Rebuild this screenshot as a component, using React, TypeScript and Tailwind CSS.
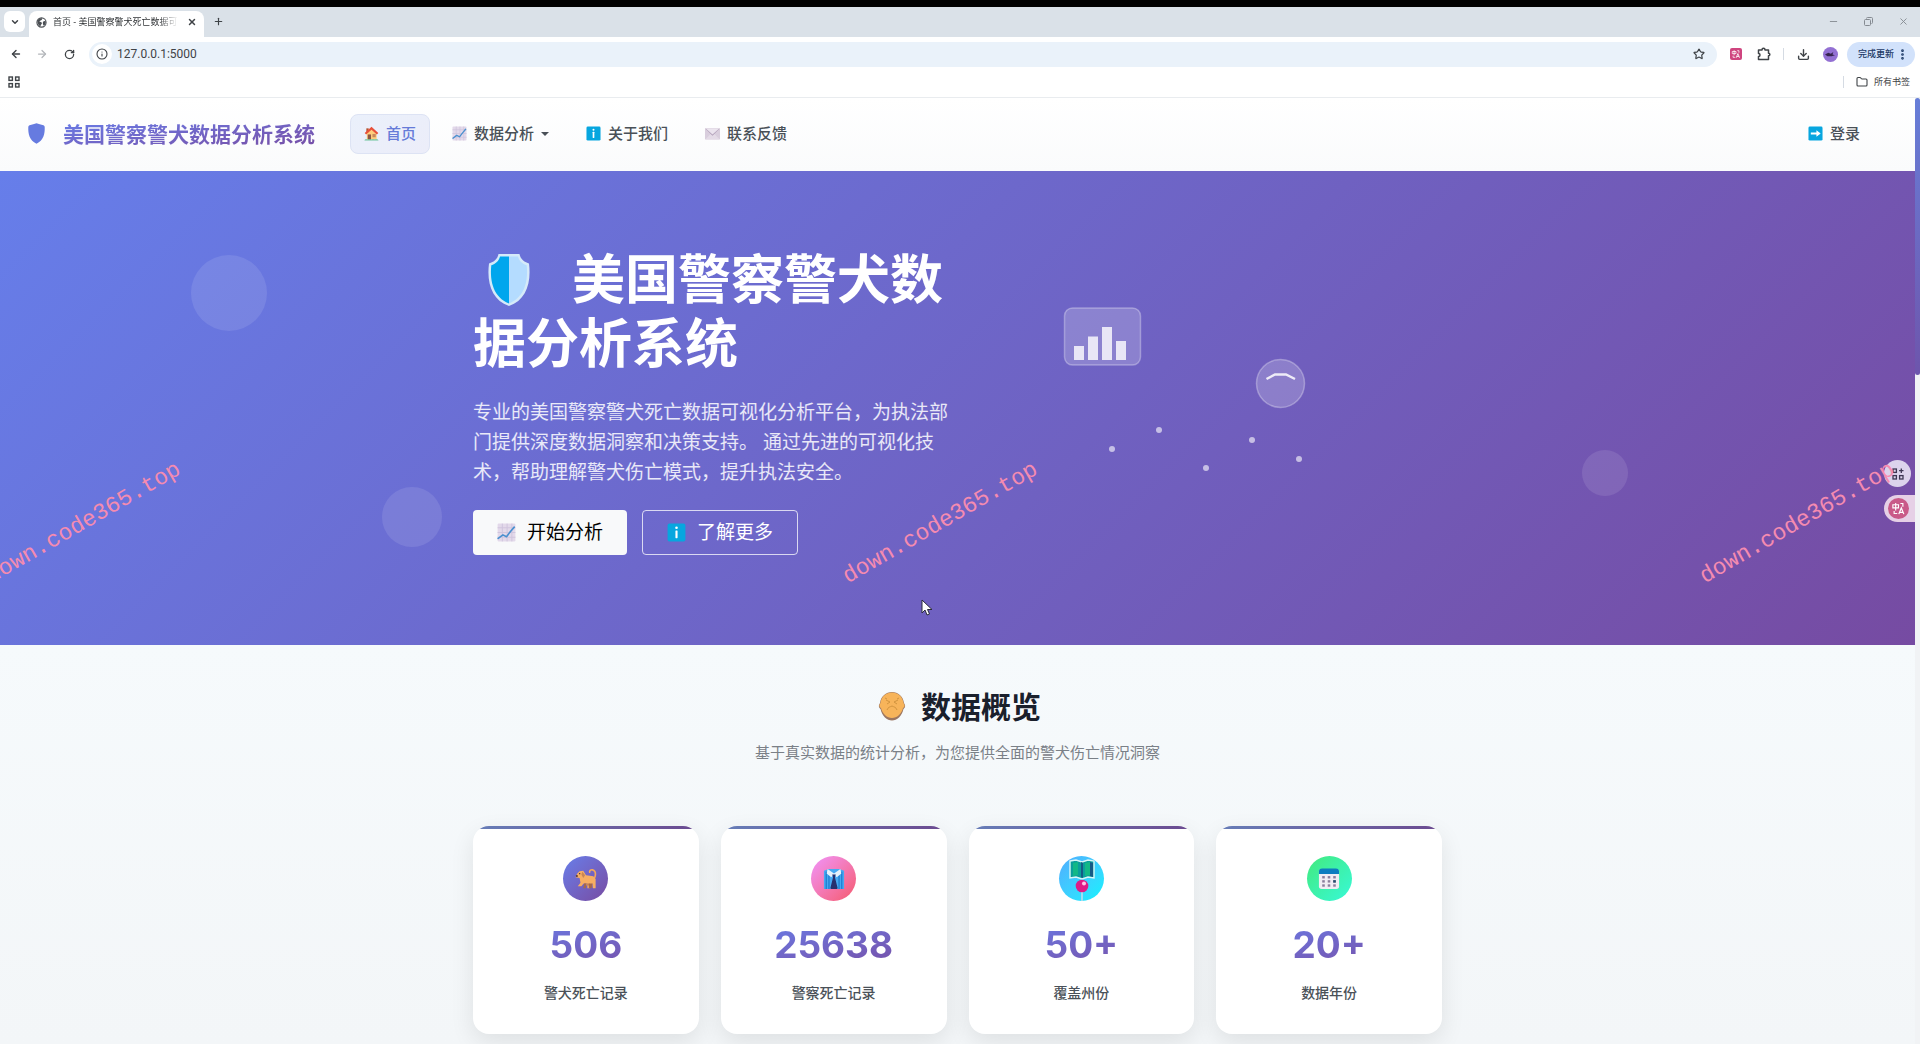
import React from "react";
import {
  ArrowLeft,
  ArrowRight,
  ChevronDown,
  Download,
  Folder,
  Info,
  Minus,
  MoreVertical,
  Plus,
  RotateCw,
  Star,
  X,
} from "lucide-react";

type IconProps = { className?: string };

function GlobeIcon({ className }: IconProps) {
  return (
    <svg viewBox="0 0 24 24" className={className} aria-hidden="true">
      <circle cx="12" cy="12" r="10" fill="#fff" stroke="#4b4f54" strokeWidth="2.4" />
      <path d="M3 9c3-5 7-7 10-6 1 2-1 4-3 4 0 2-2 2-3 3 2 1 6 1 6 4-1 2-3 3-3 6-4-1-7-6-7-11z" fill="#4b4f54" />
      <path d="M16 10c1-1 3-2 5-1 1 4-1 8-4 10-1-2-2-3-2-5 0-2 0-3 1-4z" fill="#4b4f54" />
    </svg>
  );
}

function AppsIcon({ className }: IconProps) {
  return (
    <svg viewBox="0 0 12 12" className={className} fill="none" stroke="#3f4347" strokeWidth="1.4" aria-hidden="true">
      <rect x="1" y="1" width="3.4" height="3.4" />
      <rect x="7.6" y="1" width="3.4" height="3.4" />
      <rect x="1" y="7.6" width="3.4" height="3.4" />
      <rect x="7.6" y="7.6" width="3.4" height="3.4" />
    </svg>
  );
}

function PuzzleIcon({ className }: IconProps) {
  return (
    <svg viewBox="0 0 14 14" className={className} fill="none" stroke="#3f4347" strokeWidth="1.500" strokeLinejoin="round" aria-hidden="true">
      <path d="M1.500 3H5c0-2.200 3-2.200 3 0h3.500v3.200c1.800 0 1.800 2.600 0 2.600v3.700h-10V9.500c2 0 2-3 0-3z" />
    </svg>
  );
}

function TranslateGlyph({ className }: IconProps) {
  return (
    <svg viewBox="0 0 24 24" className={className} fill="none" stroke="#fff" strokeWidth="1.8" aria-hidden="true">
      <path d="M3 6h9v5H3zM7.500 3v12M15 4h4v5M5 16v4h5" />
      <path d="M12.500 21l4-10 4 10M14 18h5" strokeWidth="2" />
    </svg>
  );
}

function BrandShield({ className }: IconProps) {
  return (
    <svg viewBox="0 0 17 21" className={className} aria-hidden="true">
      <path d="M8.500 0.300C10.500 1.200 13 1.500 15.500 2.200Q16.700 2.600 16.700 4C17 11 15.500 17.500 8.500 20.700C1.500 17.500 0 11 0.300 4Q0.300 2.600 1.500 2.200C4 1.500 6.500 1.200 8.500 0.300Z" fill="#667be0" />
    </svg>
  );
}

function HouseIcon({ className }: IconProps) {
  return (
    <svg viewBox="0 0 32 32" className={className} aria-hidden="true">
      <path d="M6 14L17 6l10 9v14H6z" fill="#ffce7c" />
      <path d="M5 5h5v8H5z" fill="#b4532f" />
      <path d="M16 1.500L1.500 15l3 3L16 8l11.500 10 3-3z" fill="#e8503a" />
      <rect x="8" y="18" width="7" height="11" fill="#8c5543" />
      <rect x="18" y="17" width="7" height="7" fill="#c98a5a" />
      <path d="M1 31c0-3 5-3 7-2 3-1 6-1 8 0 3-1 6-1 7 0 3-1 7-1 8 2z" fill="#6cc49a" />
    </svg>
  );
}

function ChartIcon({ className }: IconProps) {
  return (
    <svg viewBox="0 0 32 32" className={className} aria-hidden="true">
      <rect x="1" y="1" width="30" height="30" rx="2" fill="#e3d9ea" />
      <path d="M9 1v30M17 1v30M25 1v30M1 8h30M1 16h30M1 24h30" stroke="#cfc3dc" strokeWidth="1.500" />
      <path d="M2 26l8-6 6 3 7-9 6-7" fill="none" stroke="#4a90cf" strokeWidth="2.800" strokeLinejoin="round" strokeLinecap="round" />
    </svg>
  );
}

function InfoSquare({ className }: IconProps) {
  return (
    <svg viewBox="0 0 32 32" className={className} aria-hidden="true">
      <rect x="1" y="1" width="30" height="30" rx="3" fill="#07a6df" />
      <circle cx="16" cy="8" r="2.200" fill="#fff" />
      <rect x="14.200" y="12.500" width="3.600" height="13" rx="1" fill="#fff" />
    </svg>
  );
}

function MailIcon({ className }: IconProps) {
  return (
    <svg viewBox="0 0 32 32" className={className} aria-hidden="true">
      <rect x="0" y="4" width="32" height="25" rx="2" fill="#d9cedd" />
      <path d="M1 28l11-11h8l11 11z" fill="#e4dbe7" />
      <path d="M1 6h30L16 21z" fill="#b09fb8" />
      <path d="M1 5h30L16 18z" fill="#ebe4ee" />
    </svg>
  );
}

function LoginSquare({ className }: IconProps) {
  return (
    <svg viewBox="0 0 32 32" className={className} aria-hidden="true">
      <rect x="1" y="1" width="30" height="30" rx="3" fill="#07a6df" />
      <path d="M6 14h12V9l9 7-9 7v-5H6z" fill="#fff" />
    </svg>
  );
}

function HeroShield({ className }: IconProps) {
  return (
    <svg viewBox="0 0 44 54" className={className} aria-hidden="true">
      <path
        d="M11.500 1h21c1 5 4.500 8 9.500 9.500C44.500 30 39 47 22 53 5 47-.5 30 2 10.500 7 9 10.500 6 11.500 1z"
        fill="#d5eaf9"
      />
      <path d="M22 3.500H13C12 8 8.500 11 4.300 12.200 2.500 29 7 44.500 22 50.400z" fill="#00a6ed" />
      <path d="M22 3.500h9c1 4.500 4.500 7.500 8.700 8.700C41.500 29 37 44.500 22 50.400z" fill="#b4dcff" />
    </svg>
  );
}

function CoinFace({ className }: IconProps) {
  return (
    <svg viewBox="0 0 28 30" className={className} aria-hidden="true">
      <path d="M2 12C3 5 8 1 14 1s11 4 12 11l1 2c.5 2-.5 3-1.500 4C24 25 19 29.500 14 29.500S4 25 2.500 18C1.500 17 .5 16 1 14z" fill="#9c7660" />
      <path d="M2.500 12C3.500 5 8.500 1.500 14 1.500S24.500 5 25.500 12l1 2c.3 1.500-.5 2.500-1.500 3C23.500 23 19 27 14 27S4.500 23 3 17c-1-.5-1.800-1.500-1.500-3z" fill="#f7b45a" />
      <path d="M8 9l4 2-3 2M20 9l-4 2 3 2M9 19c1-3 3-3 5-4 2 1 4 1 5 4M7 7l2 1M21 7l-2 1" stroke="#d1943f" strokeWidth="1" fill="none" />
    </svg>
  );
}

function DogIcon({ className }: IconProps) {
  return (
    <svg viewBox="0 0 24 24" className={className} aria-hidden="true">
      <path d="M18 13c5-1 6-10 1-11-2-.3-3.500 1-3 2.500" fill="none" stroke="#f3a65a" strokeWidth="1.800" strokeLinecap="round" />
      <path d="M2.500 6L5 3.500l4-.5 3 5 8 1 2.500 3v10h-3l-.5-5-2 1-1 4h-2.500v-5H9.500L7 20H3l3-4-1-5-4.500-1z" fill="#f7ae62" />
      <path d="M8 4l3 4-2 3-2-4zM10 17h6l-.5 2h-5z" fill="#c98555" />
      <path d="M1 8h2v1.500H1zM4.500 5.500h1.200v1.200H4.500z" fill="#402a32" />
      <path d="M10 17l-1 5h3v-5zM15 17v5h3l1-5z" fill="#a5684c" />
    </svg>
  );
}

function ShirtTieIcon({ className }: IconProps) {
  return (
    <svg viewBox="0 0 24 24" className={className} aria-hidden="true">
      <path d="M1 3l5-2h12l5 2v20H1z" fill="#45a9f2" />
      <path d="M3.500 4v19M20.500 4v19M6.500 8v15M17.500 8v15" stroke="#1976c9" strokeWidth="1.200" />
      <path d="M5 1l7 5 7-5 1 5-5 4-3-3-3 3-5-4z" fill="#e4f1fb" />
      <path d="M10 7h4l-1 3 3 12-1 1H9l-1-1 3-12z" fill="#26306f" />
    </svg>
  );
}

function MapPinIcon({ className }: IconProps) {
  return (
    <svg viewBox="0 0 45 45" className={className} aria-hidden="true">
      <path d="M11 5l6-1 6 2 6-2 6 1v17l-6-1-6 2-6-2-6 1z" fill="#0b9e9b" stroke="#d9f6f8" strokeWidth="1.400" />
      <path d="M14 7l5-1v13l-5 1zM26 7l5-1v13l-5 1z" fill="#13b886" />
      <path d="M22 6l2 1v15l-2-1zM31 6l3 1v14l-3-1z" fill="#155a86" />
      <rect x="22" y="34" width="2" height="11" fill="#9edcf2" />
      <circle cx="23" cy="30" r="6.300" fill="#df1b87" />
      <circle cx="25" cy="27.500" r="2" fill="#ffc3e4" />
    </svg>
  );
}

function CalendarIcon({ className }: IconProps) {
  const cells = [6, 12, 18];
  return (
    <svg viewBox="0 0 24 24" className={className} aria-hidden="true">
      <rect x="1" y="1" width="22" height="22" rx="3" fill="#f1edf4" />
      <path d="M1 6.500V4a3.500 3.500 0 013.500-3.500h15A3.500 3.500 0 0123 4v2.500z" fill="#0d7dc0" />
      {cells.map((x) => [10, 14.5, 19].map((y) => <rect key={`${x}-${y}`} x={x - 1.4} y={y - 1.2} width="2.800" height="2.600" fill="#8b7f9c" />))}
      <rect x="16.600" y="13.300" width="2.800" height="2.600" fill="#24506f" />
    </svg>
  );
}

function BrowserChrome() {
  return (
    <header className="bg-white text-[#3f4347]">
      <div className="h-[7px] bg-black" />
      <div className="flex h-[30px] items-end bg-[#dae1e8] pl-1">
        <button aria-label="搜索标签页" className="mb-[5px] flex h-[21px] w-[21px] items-center justify-center rounded-md bg-white">
          <ChevronDown className="h-[10px] w-[10px]" strokeWidth={3.5} />
        </button>
        <div className="ml-1 flex h-[26px] w-[175px] items-center rounded-t-lg bg-white pr-[7px] pl-[7px] pb-1">
          <GlobeIcon className="h-[11px] w-[11px] shrink-0" />
          <span className="ml-[6px] w-[125px] overflow-hidden bg-linear-to-r from-[#2b2e31] from-85% to-transparent bg-clip-text text-[9px] whitespace-nowrap text-transparent">
            首页 - 美国警察警犬死亡数据可
          </span>
          <button aria-label="关闭标签页" className="ml-auto">
            <X className="h-[10px] w-[10px]" strokeWidth={3.5} />
          </button>
        </div>
        <button aria-label="新建标签页" className="mb-[10px] ml-[9px]">
          <Plus className="h-[11px] w-[11px]" strokeWidth={2.5} />
        </button>
        <div className="mb-[10px] ml-auto flex gap-6 pr-[11px] text-[#858b92]">
          <button aria-label="最小化"><Minus className="h-[11px] w-[11px]" strokeWidth={2} /></button>
          <button aria-label="还原">
            <svg viewBox="0 0 11 11" className="h-[11px] w-[11px]" fill="none" stroke="currentColor">
              <rect x="1.500" y="3.500" width="6" height="6" rx="1" />
              <path d="M3.500 2.500q0-1 1-1h4q1 0 1 1v4q0 1-1 1" />
            </svg>
          </button>
          <button aria-label="关闭"><X className="h-[11px] w-[11px]" strokeWidth={2} /></button>
        </div>
      </div>
      <div className="flex h-[34px] items-center pr-[5px] pl-[10px]">
        <button aria-label="后退"><ArrowLeft className="h-3 w-3" strokeWidth={2.8} /></button>
        <button aria-label="前进" className="ml-[14px] text-[#b3b6ba]"><ArrowRight className="h-3 w-3" strokeWidth={2.5} /></button>
        <button aria-label="重新加载" className="ml-4"><RotateCw className="h-[11px] w-[11px]" strokeWidth={2.8} /></button>
        <div className="ml-[14px] flex h-[25px] flex-1 items-center rounded-full bg-[#eaf2fa] pr-3 pl-[3px]">
          <span className="flex h-5 w-5 items-center justify-center rounded-full bg-white">
            <Info className="h-3 w-3" strokeWidth={2.2} />
          </span>
          <input aria-label="地址" defaultValue="127.0.0.1:5000" className="ml-[5px] flex-1 bg-transparent font-['Roboto'] text-[12px] outline-none" />
          <button aria-label="添加书签"><Star className="h-3 w-3" strokeWidth={2.4} /></button>
        </div>
        <button aria-label="翻译" className="ml-[13px] flex h-3 w-3 items-center justify-center rounded-[2px] bg-[#cf457f]">
          <TranslateGlyph className="h-[10px] w-[10px]" />
        </button>
        <button aria-label="扩展程序" className="ml-[15px]"><PuzzleIcon className="h-[14px] w-[14px]" /></button>
        <span className="ml-3 h-3 w-px bg-[#d5dbe3]" />
        <button aria-label="下载" className="ml-[13px]"><Download className="h-[13px] w-[13px]" strokeWidth={2.6} /></button>
        <button aria-label="个人资料" className="ml-[13px] flex h-[15px] w-[15px] items-center justify-center rounded-full bg-[#9370d3]">
          <svg viewBox="0 0 12 6" className="w-[10px]"><path d="M0 3l4-2 3 1 3-2-1 3 3 1-4 1-5 0z" fill="#36244f" /></svg>
        </button>
        <button className="ml-[9px] flex h-[25px] items-center rounded-full bg-[#d2e2fb] pr-[6px] pl-[11px] text-[9px] font-medium text-[#1d3a66]">
          完成更新
          <MoreVertical className="ml-[2px] h-[13px] w-[13px]" strokeWidth={3} />
        </button>
      </div>
      <div className="flex h-[27px] items-center border-b border-[#e9ecef] pr-[10px] pb-[4px] pl-2">
        <button aria-label="应用"><AppsIcon className="h-3 w-3" /></button>
        <span className="ml-auto h-3 w-px bg-[#d5dbe3]" />
        <button className="ml-3 flex items-center gap-[6px] text-[9px]">
          <Folder className="h-3 w-3" strokeWidth={2.2} />
          所有书签
        </button>
      </div>
    </header>
  );
}

function NavItem({ icon, label, active, caret }: { icon: React.ReactNode; label: string; active?: boolean; caret?: boolean }) {
  return (
    <a
      href="#"
      className={
        active
          ? "flex h-10 items-center gap-[7px] rounded-lg border border-[#dde3f4] bg-linear-to-br from-[#eaf0fb] to-[#ecedf9] px-[13px] font-medium text-[#667bd8]"
          : "flex h-10 items-center gap-[7px] px-[15px] font-medium text-[#495057]"
      }
    >
      {icon}
      {label}
      {caret && <span className="border-x-4 border-t-4 border-x-transparent border-t-[#495057]" />}
    </a>
  );
}

function NavBar() {
  return (
    <nav className="flex h-[73px] items-center bg-linear-to-b from-white to-[#fafbfc] pr-10 pb-[2px] pl-7 text-[15px]">
      <a href="#" className="mr-[35px] flex items-center gap-[18px]">
        <BrandShield className="h-[21px] w-[17px]" />
        <span className="bg-linear-to-br from-[#667eea] to-[#764ba2] bg-clip-text text-[21px] leading-8 font-bold text-transparent">
          美国警察警犬数据分析系统
        </span>
      </a>
      <div className="flex gap-[7px]">
        <NavItem active icon={<HouseIcon className="h-[15px] w-[15px]" />} label="首页" />
        <NavItem caret icon={<ChartIcon className="h-[15px] w-[15px]" />} label="数据分析" />
        <NavItem icon={<InfoSquare className="h-[15px] w-[15px]" />} label="关于我们" />
        <NavItem icon={<MailIcon className="h-[15px] w-[15px]" />} label="联系反馈" />
      </div>
      <div className="ml-auto">
        <NavItem icon={<LoginSquare className="h-[15px] w-[15px]" />} label="登录" />
      </div>
    </nav>
  );
}

function HeroArt() {
  return (
    <svg viewBox="0 0 300 210" className="mt-[34px] ml-[75px] h-[210px] w-[300px]" aria-hidden="true">
      <rect x="23.500" y="27" width="76" height="57" rx="8" fill="#fff" fillOpacity="0.2" stroke="#fff" strokeOpacity="0.3" strokeWidth="1.500" />
      <g fill="#fff" fillOpacity="0.8">
        <rect x="33" y="65" width="10" height="14" />
        <rect x="47" y="55.500" width="10" height="23.500" />
        <rect x="61" y="46" width="10" height="33" />
        <rect x="75" y="60" width="10" height="19" />
      </g>
      <circle cx="239.500" cy="102.500" r="24" fill="#fff" fillOpacity="0.2" stroke="#fff" strokeOpacity="0.3" strokeWidth="1.500" />
      <path d="M225.500 98l8.500-4.500h11l9 4.500" fill="none" stroke="#fff" strokeOpacity="0.850" strokeWidth="2.500" />
      <g fill="#fff" fillOpacity="0.6">
        <circle cx="71" cy="168" r="3" />
        <circle cx="118" cy="149" r="3" />
        <circle cx="165" cy="187" r="3" />
        <circle cx="211" cy="159" r="3" />
        <circle cx="258" cy="178" r="3" />
      </g>
    </svg>
  );
}

function Watermark({ className }: { className: string }) {
  return (
    <span
      className={`pointer-events-none absolute top-[338px] z-20 -rotate-[30deg] font-['Liberation_Mono'] text-[23px] leading-7 whitespace-nowrap text-[#f58bb0] ${className}`}
    >
      down.code365.top
    </span>
  );
}

function Hero() {
  return (
    <section className="relative overflow-hidden bg-linear-[135deg] from-[#667eea] to-[#764ba2] pt-[76px] pb-[90px] text-white">
      <span className="absolute top-[84px] left-[10%] -ml-px h-[76px] w-[76px] rounded-full bg-white/10" />
      <span className="absolute top-[316px] left-[20%] -ml-px h-[60px] w-[60px] rounded-full bg-white/10" />
      <span className="absolute top-[279px] right-[15%] h-[46px] w-[46px] rounded-full bg-white/10" />
      <div className="mx-auto grid max-w-[969px] grid-cols-2 gap-4">
        <div>
          <h1 className="text-[53px] leading-[64px] font-bold">
            <HeroShield className="mr-[41px] ml-[14px] inline-block h-[54px] w-[44px] align-[-8px]" />
            美国警察警犬数据分析系统
          </h1>
          <p className="mt-[22px] text-[19px] leading-[30px] text-white/85">
            专业的美国警察警犬死亡数据可视化分析平台，为执法部门提供深度数据洞察和决策支持。 通过先进的可视化技术，帮助理解警犬伤亡模式，提升执法安全。
          </p>
          <div className="mt-[23px] flex gap-[15px] text-[19px]">
            <a href="#" className="flex h-[45px] items-center gap-[11px] rounded bg-[#f8f9fa] px-6 text-black">
              <ChartIcon className="h-[19px] w-[19px]" />
              开始分析
            </a>
            <a href="#" className="flex h-[45px] items-center gap-[11px] rounded border border-white/75 px-6 text-white">
              <InfoSquare className="h-[19px] w-[19px]" />
              了解更多
            </a>
          </div>
        </div>
        <HeroArt />
      </div>
      <Watermark className="-left-[27px]" />
      <Watermark className="left-[830px]" />
      <Watermark className="left-[1687px]" />
      <svg viewBox="0 0 12 18" className="absolute top-[428px] left-[921px] h-[18px] w-[12px]" aria-hidden="true">
        <path d="M1 1v13l3-3 2 5 2.500-1-2-4.500H11z" fill="#fff" stroke="#2b2b3a" strokeWidth="1" />
      </svg>
      <div className="absolute top-[289px] right-0 flex w-[31px] flex-col gap-2">
        <button aria-label="快捷应用" className="flex h-[27px] w-[27px] items-center justify-center rounded-full bg-[#dcd3ec]">
          <svg viewBox="0 0 12 12" className="h-3 w-3" fill="none" stroke="#3d3653" strokeWidth="1.300">
            <rect x="1" y="1" width="3.400" height="3.400" />
            <rect x="1" y="7.600" width="3.400" height="3.400" />
            <rect x="7.600" y="7.600" width="3.400" height="3.400" />
            <path d="M9.300 0.500v4.400M7.100 2.700h4.400" />
          </svg>
        </button>
        <button aria-label="翻译网页" className="flex h-[27px] w-[31px] items-center rounded-l-full bg-[#e6d0e6] pl-1">
          <span className="flex h-[21px] w-[21px] items-center justify-center rounded-full bg-[#c95a88]">
            <TranslateGlyph className="h-[15px] w-[15px]" />
          </span>
        </button>
      </div>
    </section>
  );
}

const stats = [
  { value: "506", label: "警犬死亡记录", circle: "bg-linear-to-br from-[#667eea] to-[#764ba2]", icon: <DogIcon className="h-[22px] w-[22px]" /> },
  { value: "25638", label: "警察死亡记录", circle: "bg-linear-to-br from-[#f093fb] to-[#f5576c]", icon: <ShirtTieIcon className="h-[22px] w-[22px]" /> },
  { value: "50+", label: "覆盖州份", circle: "bg-linear-to-br from-[#4facfe] to-[#00f2fe]", icon: <MapPinIcon className="h-[45px] w-[45px]" /> },
  { value: "20+", label: "数据年份", circle: "bg-linear-to-br from-[#43e97b] to-[#38f9d7]", icon: <CalendarIcon className="h-[22px] w-[22px]" /> },
];

function Overview() {
  return (
    <section className="flex-1 bg-linear-to-b from-[#f6fafc] to-[#f3f6f8] pt-[38px] pb-[10px]">
      <h2 className="flex h-[46px] items-center justify-center gap-[15px] pl-1 text-[30px] font-bold text-[#1a202c]">
        <CoinFace className="h-[30px] w-[28px]" />
        数据概览
      </h2>
      <p className="mt-3 text-center text-[15px] leading-[22px] text-[#7a8087]">基于真实数据的统计分析，为您提供全面的警犬伤亡情况洞察</p>
      <div className="mx-auto mt-[63px] grid max-w-[969px] grid-cols-4 gap-[22px]">
        {stats.map((s) => (
          <article key={s.label} className="overflow-hidden rounded-2xl bg-white text-center shadow-[0_8px_24px_rgba(0,0,0,0.09)]">
            <div className="h-[3px] bg-linear-to-r from-[#667eb8] to-[#6b4a90]" />
            <div className="flex flex-col items-center pt-[27px] pb-[31px]">
              <span className={`flex h-[45px] w-[45px] items-center justify-center rounded-full ${s.circle}`}>{s.icon}</span>
              <strong className="mt-[22px] w-[180px] bg-linear-to-br from-[#667eea] to-[#764ba2] bg-clip-text font-['Inter'] text-[37px] leading-[44px] font-bold text-transparent">
                {s.value}
              </strong>
              <span className="mt-[15px] text-[14px] leading-[21px] font-medium text-[#4a5158]">{s.label}</span>
            </div>
          </article>
        ))}
      </div>
    </section>
  );
}

export default function App() {
  return (
    <div className="flex min-h-screen flex-col overflow-hidden font-['Noto_Sans','Noto_Sans_CJK_SC',sans-serif]">
      <BrowserChrome />
      <div className="flex flex-1">
        <main className="flex min-w-0 flex-1 flex-col">
          <NavBar />
          <Hero />
          <Overview />
        </main>
        <div className="w-[5px] bg-[#f1f3f5]">
          <div className="h-[277px] rounded-sm bg-linear-to-b from-[#667ed8] to-[#6d55ac]" />
        </div>
      </div>
    </div>
  );
}
